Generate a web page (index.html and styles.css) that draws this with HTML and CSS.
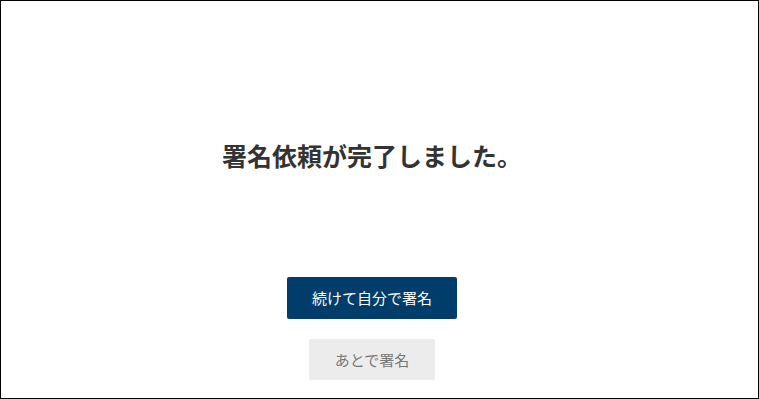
FILE: index.html
```html
<!DOCTYPE html>
<html lang="ja">
<head>
<meta charset="utf-8">
<link rel="stylesheet" href="styles.css">
</head>
<body>
<div class="frame">
  <div class="content">
    <h1 class="title">署名依頼が完了しました。</h1>
    <div class="actions">
      <button class="btn btn-primary">続けて自分で署名</button>
      <button class="btn btn-secondary">あとで署名</button>
    </div>
  </div>
</div>
</body>
</html>
```
FILE: styles.css
```css
html, body {
  margin: 0;
  padding: 0;
  background: #fff;
}
body {
  font-family: "Noto Sans CJK JP", "Noto Sans", sans-serif;
}
.frame {
  box-sizing: border-box;
  width: 759px;
  height: 399px;
  border: 1px solid #000;
  overflow: hidden;
}
.content {
  box-sizing: border-box;
  height: 100%;
  padding: 136px 15px 0 0;
  display: flex;
  flex-direction: column;
  align-items: center;
}
.title {
  margin: 0;
  font-size: 25px;
  line-height: 36px;
  font-weight: 700;
  color: #333;
}
.actions {
  margin-top: 104px;
  display: flex;
  flex-direction: column;
  align-items: center;
  gap: 20px;
}
.btn {
  font-family: inherit;
  font-size: 15px;
  border: none;
  border-radius: 2px;
  cursor: pointer;
  line-height: 20px;
}
.btn-primary {
  height: 42px;
  padding: 0 24.5px;
  background: #003d6b;
  color: #fff;
}
.btn-secondary {
  height: 41px;
  padding: 0 25.5px;
  background: #ececec;
  color: #777;
}
```
